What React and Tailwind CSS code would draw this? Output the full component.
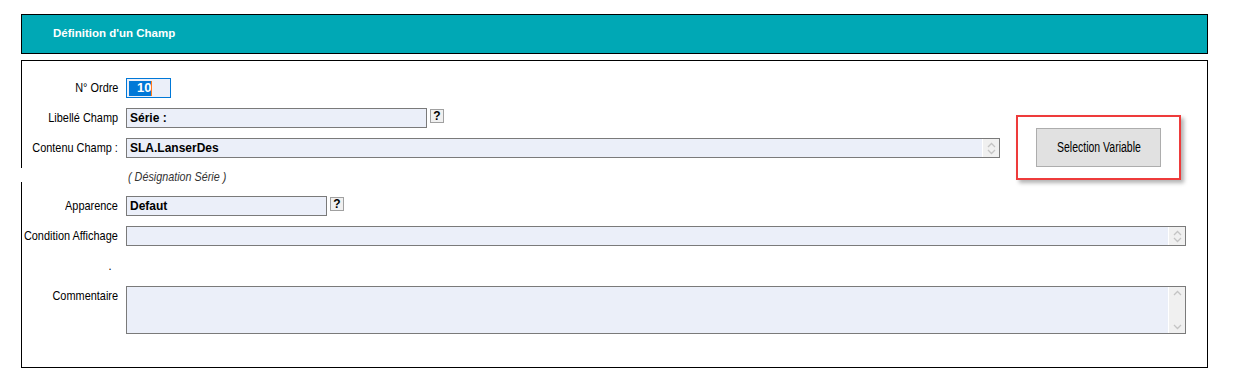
import React from "react";

const sans = { fontFamily: '"Liberation Sans", Arial, sans-serif' };

function Label({ children, extra = "" }) {
  return (
    <div className={`flex w-[96px] shrink-0 justify-end whitespace-nowrap text-[13px] leading-[20px] text-black ${extra}`} style={sans}>
      <span className="inline-block shrink-0 origin-right scale-x-[0.84]">{children}</span>
    </div>
  );
}

function Scroll({ tall }) {
  return (
    <div className={`flex w-[17px] shrink-0 flex-col items-center border-l border-white bg-[#f0f0f0] ${tall ? "justify-between py-[3px]" : "justify-center gap-[1px]"}`}>
      <svg width="9" height="6" viewBox="0 0 9 6">
        <path d="M1 5 L4.5 1.5 L8 5" fill="none" stroke="#c4c4c4" strokeWidth="1.3" />
      </svg>
      <svg width="9" height="6" viewBox="0 0 9 6">
        <path d="M1 1 L4.5 4.5 L8 1" fill="none" stroke="#c4c4c4" strokeWidth="1.3" />
      </svg>
    </div>
  );
}

function Box({ w, h = "h-[20px]", text, scroll, tall }) {
  return (
    <div className={`flex ${w} ${h} border border-[#7a7a7a] bg-[#ebeff9]`}>
      <div className="flex-1 pl-[3px] text-[12px] font-bold leading-[18px] text-black" style={sans}>
        {text}
      </div>
      {scroll && <Scroll tall={tall} />}
    </div>
  );
}

function Help() {
  return (
    <div className="ml-[3px] mt-[1px] flex h-[14px] w-[14px] items-center justify-center border border-[#a0a0a0] bg-[#f0f0f0] text-[12px] font-bold leading-none text-black" style={sans}>
      ?
    </div>
  );
}

export default function App() {
  return (
    <div className="min-h-[386px] w-[1243px] bg-white pl-[21px] pt-[14px]" style={sans}>
      <div className="flex h-[40px] w-[1187px] items-center border border-black bg-[#00a8b5] pl-[31px]">
        <span className="text-[11.5px] font-bold text-white" style={sans}>
          Définition d'un Champ
        </span>
      </div>
      <div className="relative mt-[6px] h-[308px] w-[1187px] border border-black pt-[17px]">
        <div className="absolute left-[-2px] top-[107px] h-[14px] w-[4px] bg-white" />
        <div className="flex flex-col gap-[10px]">
          <div className="flex items-start gap-[8px]">
            <Label>N° Ordre</Label>
            <div className="flex h-[20px] w-[45px] items-center border border-[#0078d7] bg-[#ebeff9] pl-[2px]">
              <div className="flex h-[15px] items-center bg-[#0078d7] pl-[8px] text-[13px] font-bold text-white" style={sans}>
                10
              </div>
              <div className="h-[15px] w-[1px] bg-[#ff7a1a]" />
            </div>
          </div>
          <div className="flex items-start gap-[8px]">
            <Label>Libellé Champ</Label>
            <div className="flex items-start">
              <Box w="w-[301px]" text="Série :" />
              <Help />
            </div>
          </div>
          <div className="flex items-start gap-[8px]">
            <Label>Contenu Champ :</Label>
            <Box w="w-[874px]" text="SLA.LanserDes" scroll />
          </div>
          <div className="flex h-[18px] items-center pl-[106px]">
            <span className="inline-block origin-left scale-x-[0.83] whitespace-nowrap text-[13px] italic text-[#333]" style={sans}>
              ( Désignation Série )
            </span>
          </div>
          <div className="flex items-start gap-[8px]">
            <Label>Apparence</Label>
            <div className="flex items-start">
              <Box w="w-[201px]" text="Defaut" />
              <Help />
            </div>
          </div>
          <div className="flex items-start gap-[8px]">
            <Label>Condition Affichage</Label>
            <Box w="w-[1060px]" text="" scroll />
          </div>
          <div className="flex items-start gap-[8px]">
            <Label extra="pr-[6px]">.</Label>
          </div>
          <div className="flex items-start gap-[8px]">
            <Label>Commentaire</Label>
            <Box w="w-[1060px]" h="h-[48px]" text="" scroll tall />
          </div>
        </div>
        <div className="absolute left-[994px] top-[54px] flex h-[65px] w-[165px] items-center justify-center border-2 border-[#ee3b3b] shadow-[3px_3px_4px_rgba(0,0,0,0.3)]">
          <div className="flex h-[39px] w-[125px] items-center justify-center border border-[#adadad] bg-[#e1e1e1] text-[14px] text-black" style={sans}>
            <span className="inline-block scale-x-[0.75] whitespace-nowrap">Selection Variable</span>
          </div>
        </div>
      </div>
    </div>
  );
}
